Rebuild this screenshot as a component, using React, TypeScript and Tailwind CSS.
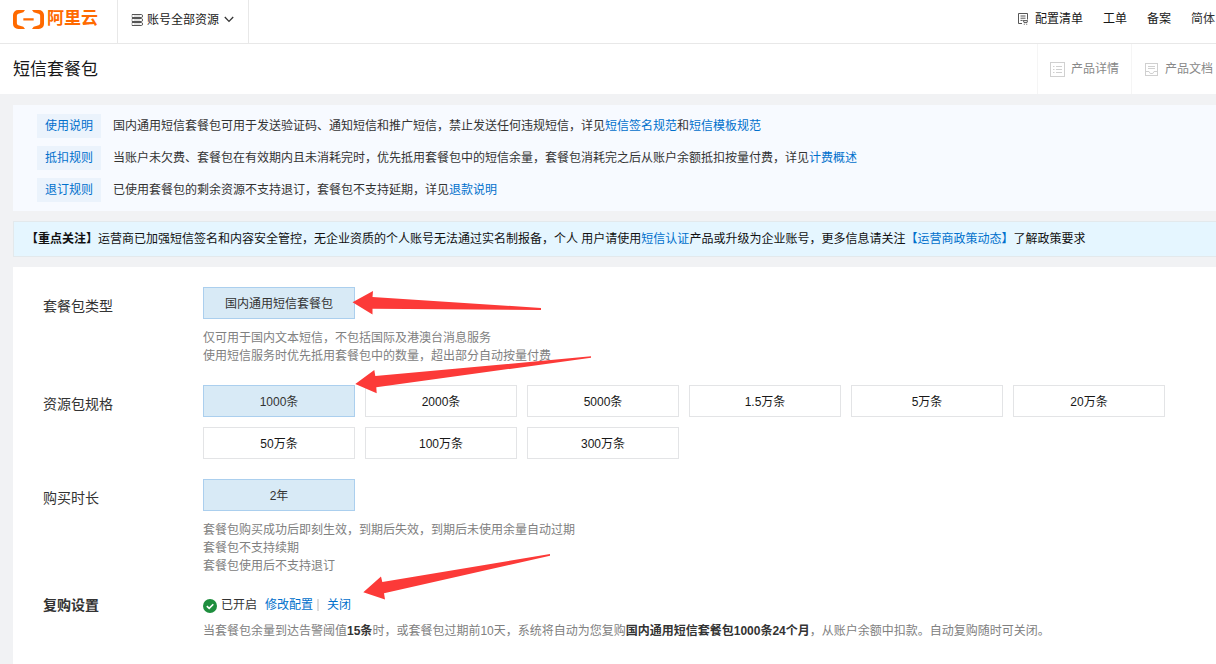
import { ReactNode } from "react";

type OptionProps = {
  label: string;
  active?: boolean;
};

type RowProps = {
  title: string;
  bold?: boolean;
  className?: string;
  labelClassName?: string;
  children: ReactNode;
};

const specs = ["1000条", "2000条", "5000条", "1.5万条", "5万条", "20万条", "50万条", "100万条", "300万条"];

const Link = ({ children }: { children: ReactNode }) => (
  <a href="#" className="text-[#0070cc]">
    {children}
  </a>
);

const Logo = () => (
  <div className="flex items-center w-[117px] pl-[13px] pb-[5px] text-[#ff6a00]">
    <svg className="w-[31px] h-[19px]" viewBox="0 4.5 24 15" preserveAspectRatio="none" fill="currentColor">
      <path d="M3.996 4.517h5.291L8.01 6.324 4.153 7.506a1.668 1.668 0 0 0-1.165 1.601v5.786a1.668 1.668 0 0 0 1.165 1.6l3.857 1.183 1.277 1.807H3.996A3.996 3.996 0 0 1 0 15.487V8.513a3.996 3.996 0 0 1 3.996-3.996m16.008 0h-5.291l1.277 1.807 3.857 1.182c.715.227 1.17.889 1.165 1.601v5.786a1.668 1.668 0 0 1-1.165 1.6l-3.857 1.183-1.277 1.807h5.291A3.996 3.996 0 0 0 24 15.487V8.513a3.996 3.996 0 0 0-3.996-3.996m-4.007 8.345H8.002v-1.804h7.995Z" />
    </svg>
    <span className="ml-[3px] text-[17px] leading-5 font-bold whitespace-nowrap">阿里云</span>
  </div>
);

const Header = () => (
  <header className="flex h-11 border-b border-[#e8e8e8] text-xs text-[#181818]">
    <Logo />
    <div className="flex items-center w-[132px] pl-[13px] pb-[4px] border-x border-[#e8e8e8]">
      <svg className="w-3 h-3" viewBox="0 0 12 12" fill="none" stroke="#555">
        <path d="M1 .5h9.5q1 0 1 1.5t-1 1.5H1M1 4.5h9.5q1 0 1 1.5t-1 1.5H1M1 8.5h9.5q1 0 1 1.5t-1 1.5H1" />
        <path d="M1 .5v3M1 4.5v3M1 8.5v3" strokeOpacity="0.5" />
        <path d="M3 2h6M3 6h6M3 10h6" strokeOpacity="0.35" />
      </svg>
      <span className="ml-1">账号全部资源</span>
      <svg className="ml-[5px] w-[10px] h-[7px]" viewBox="0 0 10 7" fill="none" stroke="#333" strokeWidth="1.3">
        <path d="M0.8 1 5 5.4 9.2 1" />
      </svg>
    </div>
    <nav className="flex items-center ml-auto pb-[6px] gap-5 whitespace-nowrap">
      <span className="flex items-center">
        <svg className="mr-[7px] w-[10px] h-3" viewBox="0 0 10 12" fill="none" stroke="#444" strokeWidth="0.9">
          <path d="M4 10.5H.5V.5h9v6M2.5 3h5M2.5 5.2h5M2.5 7.4h1.5" />
          <path d="M4.4 7.4h1l.6 2.2h3l.5-2H5.6" />
          <path d="M5.8 11.3h.9M8.3 11.3h.9" />
        </svg>
        配置清单
      </span>
      <span>工单</span>
      <span>备案</span>
      <span className="mr-[1px] text-[#333]">简体</span>
    </nav>
  </header>
);

const TitleBar = () => (
  <div className="flex h-[50px] pl-[13px] items-center">
    <h1 className="pt-[2px] text-[17px] leading-6 text-[#181818]">短信套餐包</h1>
    <div className="flex self-stretch ml-auto text-xs text-[#888] whitespace-nowrap">
      <div className="flex items-center w-[94px] pl-3 border-l border-[#f5f5f5]">
        <svg className="w-[15px] h-[15px]" viewBox="0 0 15 15" fill="none" stroke="#d0d0d0">
          <rect x="0.5" y="0.5" width="14" height="14" />
          <path d="M3 4.5h1.5M6 4.5h6M3 7.5h1.5M6 7.5h6M3 10.5h1.5M6 10.5h6" />
        </svg>
        <span className="ml-[6px]">产品详情</span>
      </div>
      <div className="flex items-center w-[85px] pl-[13px] border-l border-[#f5f5f5]">
        <svg className="w-[13px] h-[13px]" viewBox="0 0 13 13" fill="none" stroke="#d0d0d0">
          <rect x="0.5" y="0.5" width="12" height="12" />
          <path d="M3 3.5h7M3 5.5h7M0.5 8.5H4l1.2 2h2.6l1.2-2h3.5" />
        </svg>
        <span className="ml-[7px]">产品文档</span>
      </div>
    </div>
  </div>
);

const Rule = ({ tag, children }: { tag: string; children: ReactNode }) => (
  <div className="flex items-center h-6">
    <span className="w-16 h-6 leading-6 text-center bg-[#ebf3fc] text-[#0070cc]">{tag}</span>
    <p className="ml-3 text-[#333]">{children}</p>
  </div>
);

const Option = ({ label, active }: OptionProps) => (
  <button
    className={
      active
        ? "w-[152px] h-8 pt-[2px] border border-[#abcfee] bg-[#d8eaf6] text-[#333]"
        : "w-[152px] h-8 pt-[2px] border border-[#e3e4e6] bg-white text-[#181818]"
    }
  >
    {label}
  </button>
);

const Row = ({ title, bold, className, labelClassName, children }: RowProps) => (
  <div className={`flex pl-[30px] ${className ?? ""}`}>
    <div className={`w-40 shrink-0 text-sm text-[#333] ${bold ? "font-bold" : ""} ${labelClassName ?? "pt-[9px]"}`}>
      {title}
    </div>
    <div>{children}</div>
  </div>
);

const Arrows = () => (
  <svg
    className="absolute left-0 top-0 w-[1216px] h-[664px] pointer-events-none"
    viewBox="0 0 1216 664"
    fill="#fc3a38"
  >
    <path d="M352.5 302.3 373 291 372.5 297 541 308V310L372.5 308.7V314.5Z" />
    <path d="M355.3 384 374.3 370 375.3 376 591 356.3V357.7L376.3 387.3 376.7 393.3Z" />
    <path d="M363.3 592.3 381 576.5 382.3 582 550 554V555.7L384 593.3 385 599.5Z" />
  </svg>
);

const App = () => {
  return (
    <div
      lang="zh-CN"
      className="relative w-[1216px] h-[664px] overflow-hidden bg-white text-xs font-['Liberation_Sans','Noto_Sans_CJK_SC',sans-serif]"
    >
      <Header />
      <TitleBar />

      <main className="h-[570px] pl-[13px] pt-[11px] bg-[#f1f2f4]">
        <section className="flex flex-col gap-2 h-[106px] pl-6 pt-[9px] bg-[#f7faff]">
          <Rule tag="使用说明">
            国内通用短信套餐包可用于发送验证码、通知短信和推广短信，禁止发送任何违规短信，详见<Link>短信签名规范</Link>和
            <Link>短信模板规范</Link>
          </Rule>
          <Rule tag="抵扣规则">
            当账户未欠费、套餐包在有效期内且未消耗完时，优先抵用套餐包中的短信余量，套餐包消耗完之后从账户余额抵扣按量付费，详见
            <Link>计费概述</Link>
          </Rule>
          <Rule tag="退订规则">
            已使用套餐包的剩余资源不支持退订，套餐包不支持延期，详见<Link>退款说明</Link>
          </Rule>
        </section>

        <section className="mt-[10px] h-9 pl-3 leading-[34px] border border-r-0 border-[#e3e9ec] bg-[#e5f6ff] text-[#111] whitespace-nowrap">
          <b>【重点关注】</b>运营商已加强短信签名和内容安全管控，无企业资质的个人账号无法通过实名制报备，个人 用户请使用
          <Link>短信认证</Link>产品或升级为企业账号，更多信息请关注<Link>【运营商政策动态】</Link>了解政策要求
        </section>

        <section className="mt-[10px] h-[397px] pt-5 bg-white text-[#808080] leading-[18px]">
          <Row title="套餐包类型">
            <Option label="国内通用短信套餐包" active />
            <p className="mt-[10px]">仅可用于国内文本短信，不包括国际及港澳台消息服务</p>
            <p>使用短信服务时优先抵用套餐包中的数量，超出部分自动按量付费</p>
          </Row>

          <Row title="资源包规格" className="mt-5">
            <div className="flex flex-wrap gap-[10px] w-[980px]">
              {specs.map((spec, i) => (
                <Option key={spec} label={spec} active={i === 0} />
              ))}
            </div>
          </Row>

          <Row title="购买时长" className="mt-5">
            <Option label="2年" active />
            <p className="mt-[10px]">套餐包购买成功后即刻生效，到期后失效，到期后未使用余量自动过期</p>
            <p>套餐包不支持续期</p>
            <p>套餐包使用后不支持退订</p>
          </Row>

          <Row title="复购设置" bold className="mt-5" labelClassName="pt-0">
            <div className="flex items-center h-5">
              <svg className="mt-[2px] w-[14px] h-[14px]" viewBox="0 0 14 14">
                <circle cx="7" cy="7" r="7" fill="#1e8e3e" />
                <path d="M3.8 7.1 6.2 9.4 10.3 5.2" fill="none" stroke="#fff" strokeWidth="1.6" />
              </svg>
              <span className="ml-1 text-[#333]">已开启</span>
              <span className="ml-2">
                <Link>修改配置</Link>
              </span>
              <span className="ml-1 w-[2px] h-3 bg-[#ddd]" />
              <span className="ml-2">
                <Link>关闭</Link>
              </span>
            </div>
            <p className="mt-[7px] whitespace-nowrap">
              当套餐包余量到达告警阈值<b className="text-[#333]">15条</b>时，或套餐包过期前10天，系统将自动为您复购
              <b className="text-[#333]">国内通用短信套餐包1000条24个月</b>，从账户余额中扣款。自动复购随时可关闭。
            </p>
          </Row>
        </section>
      </main>

      <Arrows />
    </div>
  );
};

export default App;
